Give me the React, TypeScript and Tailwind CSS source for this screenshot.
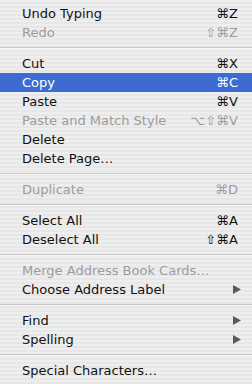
type Item =
    | { sep: true }
    | { sep?: false; label: string; keys?: string; disabled?: boolean; active?: boolean; submenu?: boolean };

const items: Item[] = [
    { label: 'Undo Typing', keys: '⌘Z' },
    { label: 'Redo', keys: '⇧⌘Z', disabled: true },
    { sep: true },
    { label: 'Cut', keys: '⌘X' },
    { label: 'Copy', keys: '⌘C', active: true },
    { label: 'Paste', keys: '⌘V' },
    { label: 'Paste and Match Style', keys: '⌥⇧⌘V', disabled: true },
    { label: 'Delete' },
    { label: 'Delete Page…' },
    { sep: true },
    { label: 'Duplicate', keys: '⌘D', disabled: true },
    { sep: true },
    { label: 'Select All', keys: '⌘A' },
    { label: 'Deselect All', keys: '⇧⌘A' },
    { sep: true },
    { label: 'Merge Address Book Cards…', disabled: true },
    { label: 'Choose Address Label', submenu: true },
    { sep: true },
    { label: 'Find', submenu: true },
    { label: 'Spelling', submenu: true },
    { sep: true },
    { label: 'Special Characters…' },
];

function Arrow() {
    return (
        <svg width="8" height="9" viewBox="0 0 8 9" className="shrink-0">
            <path d="M0 0 L8 4.5 L0 9 Z" fill="#5a5a5a" />
        </svg>
    );
}

export default function App() {
    return (
        <div className="w-[252px] h-[384px] overflow-hidden py-1 font-['DejaVu_Sans',sans-serif] text-[13px] bg-[repeating-linear-gradient(180deg,#eeeeee_0px,#eeeeee_2px,#e7e7e7_2px,#e7e7e7_4px)]">
            {items.map((item, i) =>
                item.sep ? (
                    <div key={i} className="h-3 flex flex-col justify-center">
                        <div className="h-px bg-[#c8c8c8]" />
                        <div className="h-px bg-[#f6f6f6]" />
                    </div>
                ) : (
                    <div
                        key={i}
                        className={`h-[19px] flex items-center pl-[22px] pr-[14px] ${
                            item.active
                                ? 'bg-[#3d6bd2] text-white'
                                : item.disabled
                                  ? 'text-[#9c9c9c]'
                                  : 'text-[#111]'
                        }`}
                    >
                        <span className="flex-1 whitespace-nowrap">{item.label}</span>
                        {item.keys && <span className="whitespace-nowrap">{item.keys}</span>}
                        {item.submenu && (
                            <span className="-mr-[3px]">
                                <Arrow />
                            </span>
                        )}
                    </div>
                )
            )}
        </div>
    );
}
